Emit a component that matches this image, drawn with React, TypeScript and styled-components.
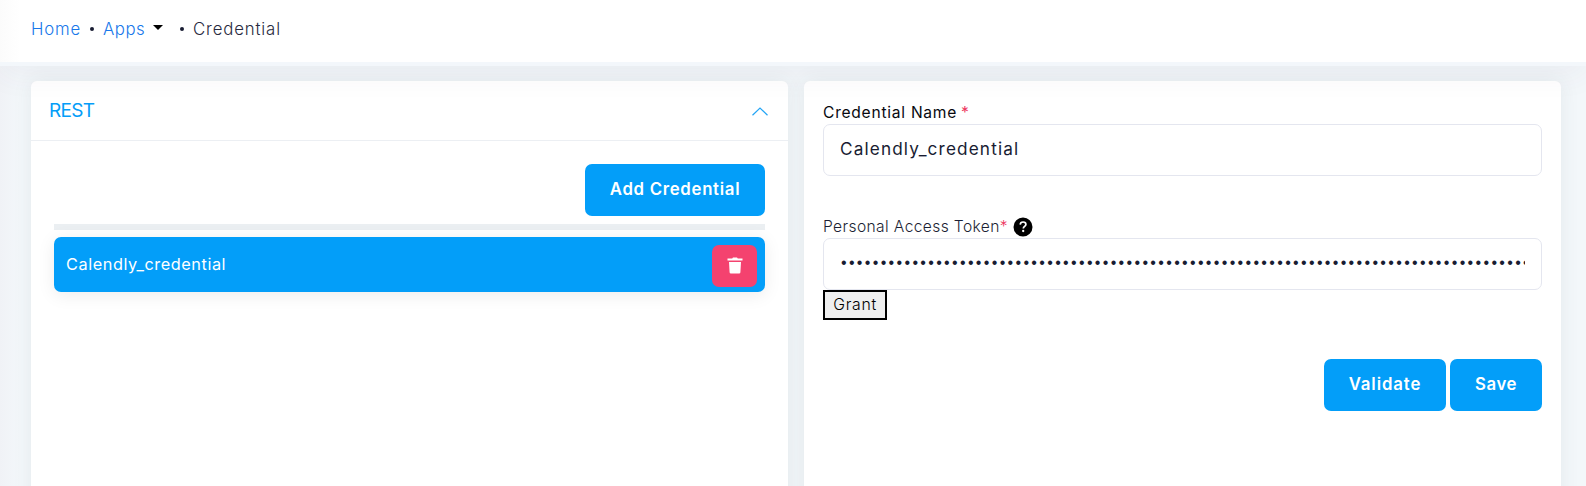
import React from "react";
import styled, { createGlobalStyle } from "styled-components";

const GlobalStyle = createGlobalStyle`
  *, *::before, *::after { box-sizing: border-box; }
  html, body { margin: 0; overflow: hidden; }
  body {
    height: 486px;
    background: #f3f7fa;
    color: #181c32;
    font-family: Inter, "Open Sans", sans-serif;
    font-size: 16px;
  }
  button, input { font-family: inherit; }
`;

const Page = styled.div`
  display: flex;
  flex-direction: column;
  height: 486px;
  overflow: hidden;
  background: linear-gradient(to right, #f0f2f6 0, #f3f7fa 20px);
`;

const Header = styled.header`
  position: relative;
  z-index: 2;
  flex: none;
  height: 66px;
  padding: 16px 31px 0;
  border-bottom: 4px solid #f3f7fb;
  background: linear-gradient(to right, #fbfbfb 0, #fff 20px);
  box-shadow: 0 10px 30px rgba(82, 63, 105, 0.05);
`;

const Crumbs = styled.nav`
  display: flex;
  align-items: center;
  height: 24px;
`;

const Text = styled.span<{ $track?: number }>`
  letter-spacing: ${(p) => p.$track ?? 0}px;
  white-space: pre;
`;

const Crumb = styled(Text)<{ $link?: boolean; $width: number }>`
  width: ${(p) => p.$width}px;
  padding-top: 1px;
  color: ${(p) => (p.$link ? "#1878ea" : "#282a40")};
  font-size: 16.8px;
  font-weight: 320;
  line-height: 24px;
`;

const Dot = styled.span<{ $before: number; $after: number }>`
  width: 4px;
  height: 4px;
  margin: 1px ${(p) => p.$after}px 0 ${(p) => p.$before}px;
  border-radius: 50%;
  background: #181c32;
`;

const Caret = styled.span`
  margin: -1px 0 0 8px;
  border: 5px solid transparent;
  border-top-color: #000;
  border-bottom: 0;
`;

const Columns = styled.main`
  display: grid;
  grid-template-columns: 757px 757px;
  gap: 16px;
  flex: 1;
  padding: 15px 25px 0 31px;
`;

const Card = styled.section`
  height: 440px;
  border-radius: 6px;
  background: #fff;
  box-shadow: 0 0 20px rgba(56, 71, 80, 0.08);
`;

const CardHeader = styled.div`
  display: flex;
  align-items: center;
  justify-content: space-between;
  height: 60px;
  padding: 0 20px 0 18px;
  border-bottom: 1px solid #eceff3;
`;

const Chevron = styled.svg`
  margin-top: 1px;
`;

const CardTitle = styled(Text)`
  color: #049df8;
  font-size: 19px;
`;

const CardBody = styled.div`
  display: flex;
  flex-direction: column;
  padding: 23px 23px 0;
`;

const Actions = styled.div`
  display: flex;
  justify-content: flex-end;
  gap: 4px;
`;

const PrimaryButton = styled.button<{ $width: number; $track?: number }>`
  width: ${(p) => p.$width}px;
  height: 52px;
  padding: 0 0 2px;
  border: 0;
  border-radius: 7px;
  background: #039ef9;
  color: #fff;
  font-size: 16.8px;
  font-weight: 560;
  letter-spacing: ${(p) => p.$track ?? 0}px;
`;

const Divider = styled.div`
  height: 6px;
  margin: 8px 0 7px;
  background: #ebeff2;
`;

const CredentialRow = styled.div`
  display: flex;
  align-items: center;
  justify-content: space-between;
  height: 55px;
  padding: 0 8px 0 12px;
  border-radius: 7px;
  background: #039ef9;
  box-shadow: 0 3px 18px rgba(0, 0, 0, 0.08);
  color: #fff;
`;

const RowName = styled(Text)`
  padding-bottom: 2px;
  font-size: 16.3px;
`;

const DeleteButton = styled.button`
  display: flex;
  align-items: center;
  justify-content: center;
  width: 45px;
  height: 42px;
  margin-top: 2px;
  padding: 0;
  border: 0;
  border-radius: 7px;
  background: #f4426f;
`;

const Form = styled.form`
  display: flex;
  flex-direction: column;
  padding: 19px 19px 0;
`;

const Label = styled.label<{ $light?: boolean }>`
  display: flex;
  align-items: center;
  height: 24px;
  color: ${(p) => (p.$light ? "#1c1f34" : "#08090f")};
  font-size: 15.6px;
  font-weight: ${(p) => (p.$light ? 310 : 380)};
`;

const Required = styled.span<{ $gap: number }>`
  margin-left: ${(p) => p.$gap}px;
  color: #ed3560;
`;

const Help = styled.svg`
  margin: 2px 0 0 5px;
`;

const Field = styled.input<{ $track?: number }>`
  height: 52px;
  padding: 0 16px 3px;
  border: 1px solid #e4e6ef;
  border-radius: 7px;
  outline: 0;
  background: #fff;
  color: #181c32;
  font-size: 17.2px;
  letter-spacing: ${(p) => p.$track ?? 0}px;
`;

const SecretField = styled(Field)`
  padding-bottom: 2px;
  font-family: "Liberation Sans", sans-serif;
  font-size: 16px;
  text-indent: 1px;
`;

const Spacer = styled.div<{ $height: number }>`
  height: ${(p) => p.$height}px;
`;

const GrantButton = styled.button`
  width: 64px;
  height: 30px;
  padding: 0 0 1px;
  border: 2px solid #000;
  background: #efefef;
  color: #000;
  font-size: 15.8px;
  font-weight: 320;
  letter-spacing: 0.7px;
`;

export default function App() {
  return (
    <>
      <GlobalStyle />
      <Page>
        <Header>
          <Crumbs>
            <Crumb $link $width={49} $track={0.8}>Home</Crumb>
            <Dot $before={10} $after={9} />
            <Crumb $link $width={42} $track={0.5}>Apps</Crumb>
            <Caret />
            <Dot $before={17} $after={9} />
            <Crumb $width={88} $track={0.85}>Credential</Crumb>
          </Crumbs>
        </Header>
        <Columns>
          <Card>
            <CardHeader>
              <CardTitle $track={-0.7}>REST</CardTitle>
              <Chevron width="16" height="9" viewBox="0 0 16 9" fill="none" stroke="#24a5f5" strokeWidth="1.2">
                <path d="M.5 8.3 8 1l7.5 7.3" />
              </Chevron>
            </CardHeader>
            <CardBody>
              <Actions>
                <PrimaryButton $width={180} $track={0.7}>Add Credential</PrimaryButton>
              </Actions>
              <Divider />
              <CredentialRow>
                <RowName $track={0.56}>Calendly_credential</RowName>
                <DeleteButton type="button" aria-label="Delete credential">
                  <svg width="16" height="17" viewBox="0 0 16 17" fill="#fff">
                    <path d="M.5 1.5h4.7L6 .5h4l.8 1h4.7v2H.5zM2 5h12l-.6 10.2a1.3 1.3 0 0 1-1.3 1.3H3.9a1.3 1.3 0 0 1-1.3-1.3z" />
                  </svg>
                </DeleteButton>
              </CredentialRow>
            </CardBody>
          </Card>
          <Card>
            <Form onSubmit={(e) => e.preventDefault()}>
              <Label>
                <Text $track={0.74}>Credential Name</Text>
                <Required $gap={4}>*</Required>
              </Label>
              <Field defaultValue="Calendly_credential" $track={1.13} />
              <Spacer $height={38} />
              <Label $light>
                <Text $track={0.38}>Personal Access Token</Text>
                <Required $gap={0}>*</Required>
                <Help width="20" height="20" viewBox="0 0 20 20">
                  <circle cx="10" cy="10" r="9.5" fill="#000" />
                  <path d="M7.2 7.6C7.3 5.9 8.5 5 10.1 5c1.6 0 2.8.9 2.8 2.4 0 1.9-2.6 2.1-2.6 4.1" fill="none" stroke="#fff" strokeWidth="1.7" />
                  <circle cx="10.2" cy="14" r="1.15" fill="#fff" />
                </Help>
              </Label>
              <SecretField type="password" defaultValue={"x".repeat(100)} $track={2.33} />
              <GrantButton type="button">Grant</GrantButton>
              <Spacer $height={39} />
              <Actions>
                <PrimaryButton type="button" $width={122} $track={0.9}>Validate</PrimaryButton>
                <PrimaryButton type="submit" $width={92} $track={0.6}>Save</PrimaryButton>
              </Actions>
            </Form>
          </Card>
        </Columns>
      </Page>
    </>
  );
}
